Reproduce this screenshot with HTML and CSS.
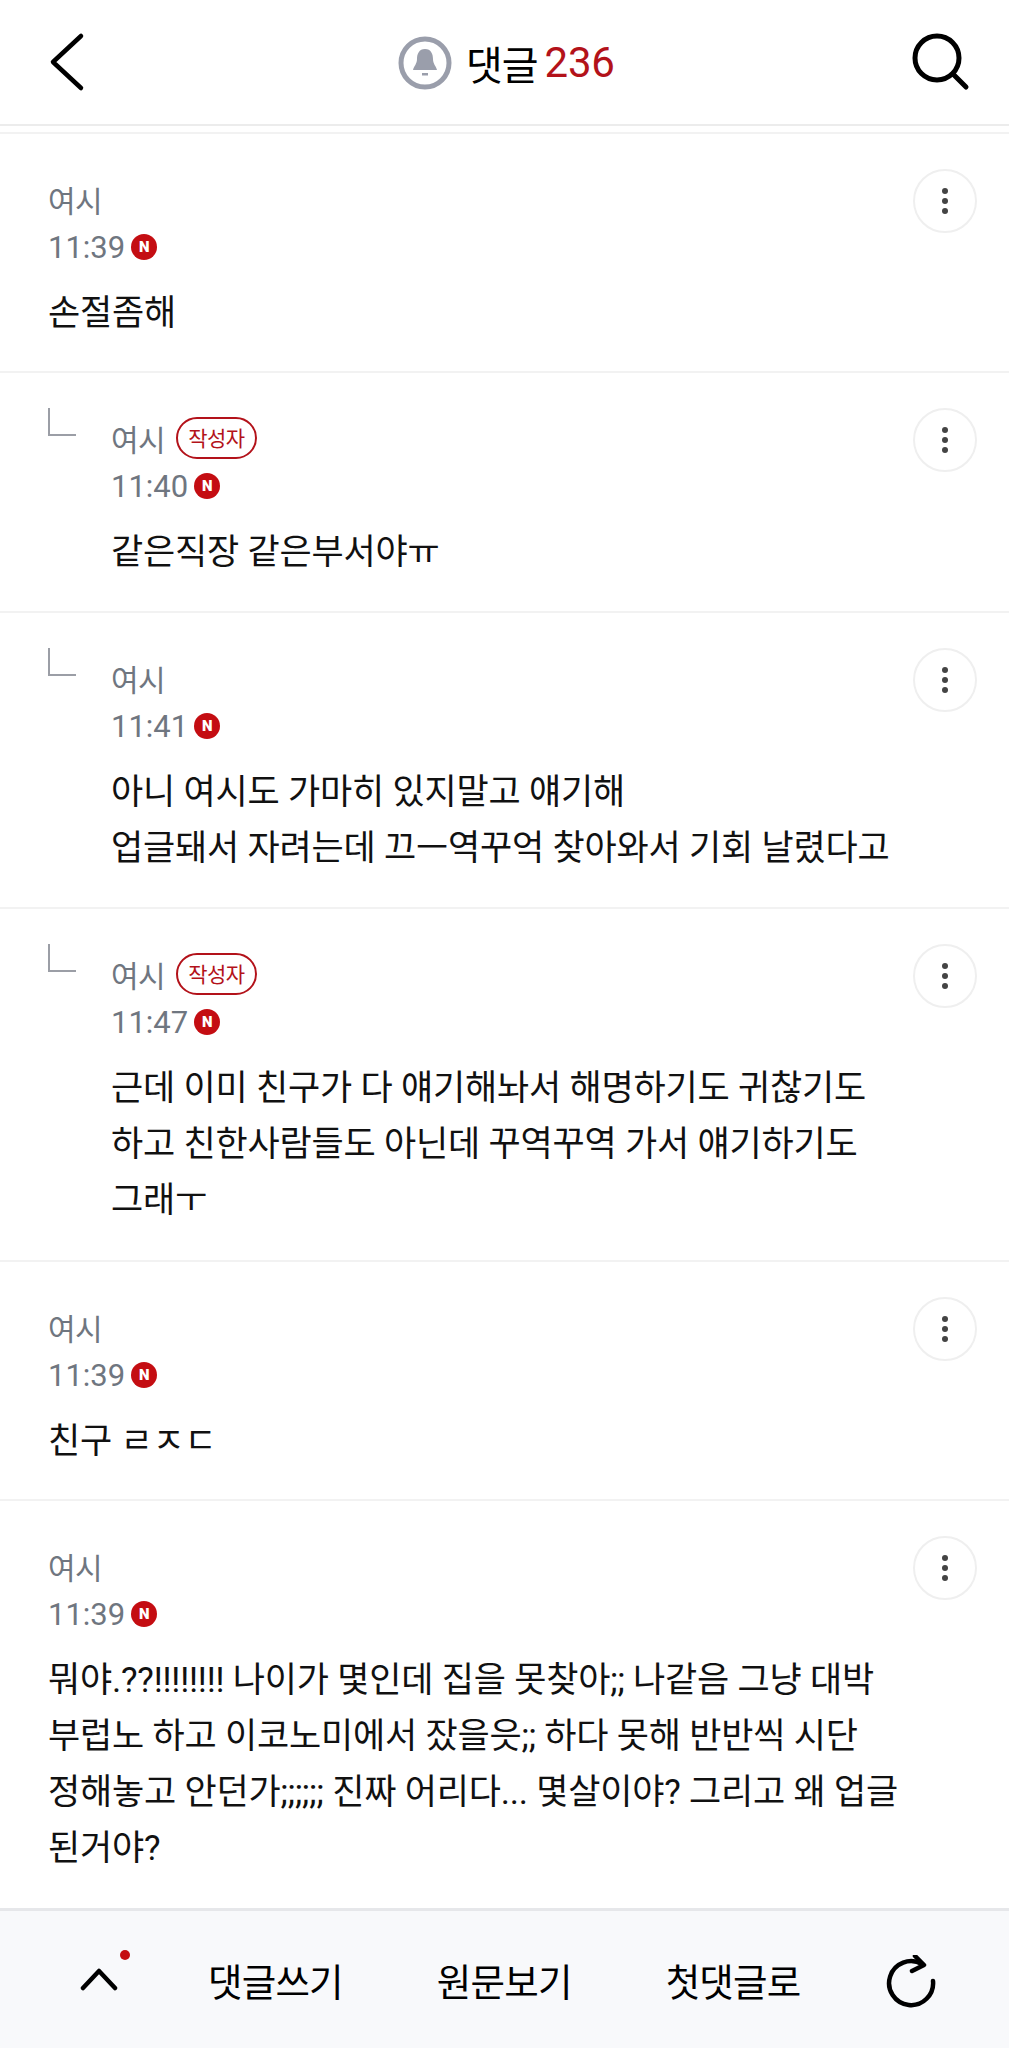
FILE: index.html
```html
<!DOCTYPE html>
<html lang="ko">
<head>
<meta charset="utf-8">
<title>댓글</title>
<link rel="stylesheet" href="styles.css">
</head>
<body>
<div class="page">
  <header class="topbar">
    <svg class="back" width="40" height="60" viewBox="0 0 40 60"><path d="M33 4 L5 30 L33 56" fill="none" stroke="#000" stroke-width="4.5" stroke-linecap="round" stroke-linejoin="round"/></svg>
    <div class="title">
      <svg class="bell" width="54" height="54" viewBox="0 0 54 54"><circle cx="27" cy="27" r="24" fill="#fff" stroke="#9a9eab" stroke-width="5"/><path d="M27 13c-6 0-8 5-8 10 0 5-3 7-4 11h24c-1-4-4-6-4-11 0-5-2-10-8-10z" fill="#9a9eab"/><rect x="24" y="37" width="6" height="2.5" fill="#9a9eab"/></svg>
      <span class="title-text">댓글</span><span class="title-count">236</span>
    </div>
    <svg class="search" width="60" height="60" viewBox="0 0 60 60"><circle cx="26" cy="26" r="22" fill="none" stroke="#000" stroke-width="5"/><path d="M42 42 L55 55" stroke="#000" stroke-width="5" stroke-linecap="round"/></svg>
  </header>
  <div class="gap"></div>
  <main class="list">
    <article class="row">
      <div class="content">
        <div class="name-line"><span class="name">여시</span></div>
        <div class="time-line"><span class="time">11:39</span><span class="new">N</span></div>
        <p class="body">손절좀해</p>
      </div>
      <button class="more"><i></i><i></i><i></i></button>
    </article>
    <article class="row reply">
      <span class="elbow"></span>
      <div class="content">
        <div class="name-line"><span class="name">여시</span><span class="badge">작성자</span></div>
        <div class="time-line"><span class="time">11:40</span><span class="new">N</span></div>
        <p class="body">같은직장 같은부서야ㅠ</p>
      </div>
      <button class="more"><i></i><i></i><i></i></button>
    </article>
    <article class="row reply">
      <span class="elbow"></span>
      <div class="content">
        <div class="name-line"><span class="name">여시</span></div>
        <div class="time-line"><span class="time">11:41</span><span class="new">N</span></div>
        <p class="body">아니 여시도 가마히 있지말고 얘기해<br>업글돼서 자려는데 끄ㅡ역꾸억 찾아와서 기회 날렸다고</p>
      </div>
      <button class="more"><i></i><i></i><i></i></button>
    </article>
    <article class="row reply">
      <span class="elbow"></span>
      <div class="content">
        <div class="name-line"><span class="name">여시</span><span class="badge">작성자</span></div>
        <div class="time-line"><span class="time">11:47</span><span class="new">N</span></div>
        <p class="body">근데 이미 친구가 다 얘기해놔서 해명하기도 귀찮기도<br>하고 친한사람들도 아닌데 꾸역꾸역 가서 얘기하기도<br>그래ㅜ</p>
      </div>
      <button class="more"><i></i><i></i><i></i></button>
    </article>
    <article class="row">
      <div class="content">
        <div class="name-line"><span class="name">여시</span></div>
        <div class="time-line"><span class="time">11:39</span><span class="new">N</span></div>
        <p class="body">친구 ㄹㅈㄷ</p>
      </div>
      <button class="more"><i></i><i></i><i></i></button>
    </article>
    <article class="row">
      <div class="content">
        <div class="name-line"><span class="name">여시</span></div>
        <div class="time-line"><span class="time">11:39</span><span class="new">N</span></div>
        <p class="body">뭐야.??!!!!!!!! 나이가 몇인데 집을 못찾아;; 나같음 그냥 대박<br>부럽노 하고 이코노미에서 잤을읏;; 하다 못해 반반씩 시단<br>정해놓고 안던가;;;;;; 진짜 어리다... 몇살이야? 그리고 왜 업글<br>된거야?</p>
      </div>
      <button class="more"><i></i><i></i><i></i></button>
    </article>
  </main>
  <footer class="bottombar">
    <span class="up">
      <svg width="38" height="28" viewBox="0 0 38 28"><path d="M3 23 L19 6 L35 23" fill="none" stroke="#000" stroke-width="4.5" stroke-linecap="round" stroke-linejoin="round"/></svg>
      <span class="dot"></span>
    </span>
    <span class="action">댓글쓰기</span>
    <span class="action">원문보기</span>
    <span class="action">첫댓글로</span>
    <svg class="refresh" width="52" height="54" viewBox="0 0 52 54"><path d="M36 9 A22 22 0 1 0 47 26" fill="none" stroke="#000" stroke-width="4.5" stroke-linecap="round"/><path d="M29 1 L38 10 L26 16" fill="none" stroke="#000" stroke-width="4.5" stroke-linecap="round" stroke-linejoin="round"/></svg>
  </footer>
</div>
</body>
</html>
```
FILE: styles.css
```css
* { box-sizing: border-box; }
html, body { margin: 0; padding: 0; background: #fff; }
body { font-family: "Noto Sans CJK KR", "Noto Sans", sans-serif; color: #000; }
.page { width: 1009px; height: 2048px; display: flex; flex-direction: column; overflow: hidden; }

.topbar { height: 126px; flex: none; display: flex; align-items: center; justify-content: space-between; padding: 0 38px 0 48px; border-bottom: 2px solid #ececec; position: relative; }
.back { margin-top: -1px; }
.title { position: absolute; left: 398px; top: 36px; display: flex; align-items: center; height: 54px; }
.bell { margin-right: 14px; }
.title-text { font-size: 40px; letter-spacing: -1px; margin-right: 7px; line-height: 54px; }
.title-count { font-family: "Roboto", sans-serif; font-size: 42px; color: #b3121a; line-height: 54px; letter-spacing: -0.3px; }
.gap { height: 6px; flex: none; }

.list { flex: 1; min-height: 0; overflow: hidden; }
.row { display: flex; align-items: flex-start; padding: 42px 32px 0 48px; border-top: 2px solid #f2f2f2; }
.row:nth-child(1) { height: 239px; }
.row:nth-child(2) { height: 240px; }
.row:nth-child(3) { height: 296px; }
.row:nth-child(4) { height: 353px; }
.row:nth-child(5) { height: 239px; }
.elbow { flex: none; width: 28px; height: 28px; margin-right: 35px; margin-top: -7px; border-left: 2px solid #9b9ea6; border-bottom: 2px solid #9b9ea6; }
.content { flex: 1; min-width: 0; }
.name-line { display: flex; align-items: center; height: 46px; }
.name { font-size: 30px; color: #6f7680; letter-spacing: -0.5px; }
.badge { margin-left: 11px; height: 42px; padding: 0 10px; border: 2px solid #b3121a; border-radius: 21px; color: #b3121a; font-size: 21px; line-height: 37px; letter-spacing: -0.5px; }
.time-line { display: flex; align-items: center; height: 46px; margin-top: 2px; }
.time { font-family: "Roboto", sans-serif; font-size: 31px; color: #6f7680; }
.new { width: 26px; height: 26px; margin-left: 6px; border-radius: 50%; background: #c40d12; color: #fff; font-family: "Roboto", sans-serif; font-weight: 900; font-size: 15px; line-height: 26px; text-align: center; }
.body { margin: 16px 0 0; font-family: "Roboto", "Noto Sans CJK KR", sans-serif; font-size: 35px; line-height: 56px; color: #111; letter-spacing: -0.2px; white-space: nowrap; }
.more { flex: none; width: 64px; height: 64px; margin-top: -7px; padding: 0; background: #fff; border: 2px solid #efefef; border-radius: 50%; display: flex; flex-direction: column; align-items: center; justify-content: center; gap: 4px; }
.more i { display: block; width: 6px; height: 6px; border-radius: 50%; background: #444; }

.bottombar { height: 140px; flex: none; background: #f8f9fb; border-top: 3px solid #e6e7ea; display: flex; align-items: center; position: relative; padding-left: 80px; }
.up { position: relative; width: 38px; height: 28px; margin-right: 90px; margin-top: -1px; display: block; }
.up svg { display: block; }
.dot { position: absolute; left: 40px; top: -15px; width: 10px; height: 10px; border-radius: 50%; background: #c40d12; }
.action { font-size: 37.5px; letter-spacing: -0.8px; margin-right: 94px; }
.action:nth-of-type(4) { margin-right: 0; }
.refresh { position: absolute; left: 886px; top: 44px; }
```
